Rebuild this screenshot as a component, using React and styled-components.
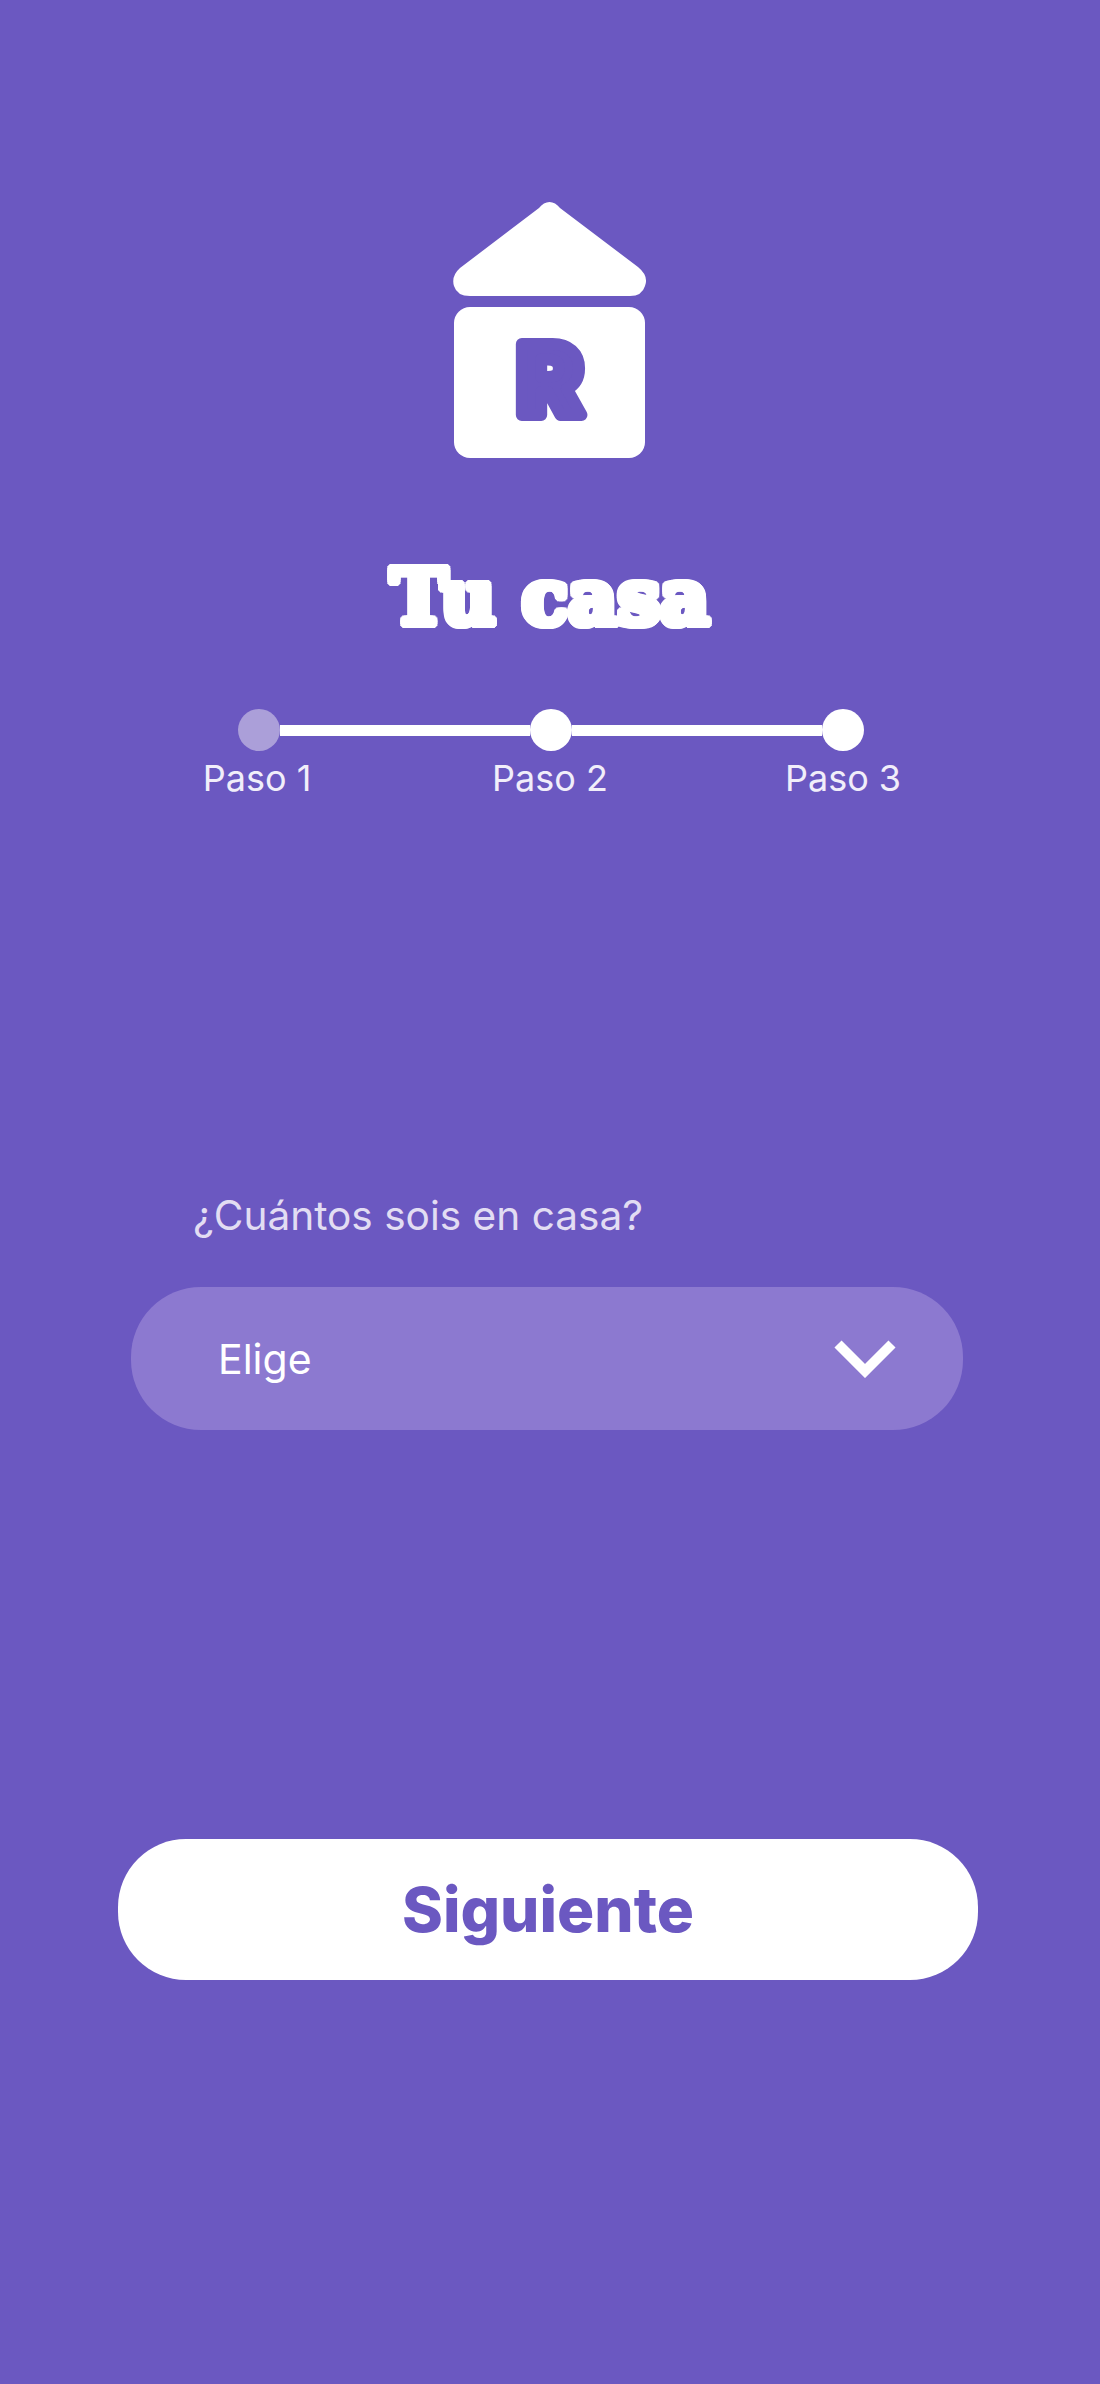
import React from "react";
import styled, { createGlobalStyle } from "styled-components";

const Global = createGlobalStyle`
  html, body { margin: 0; padding: 0; background: #6b58c1; }
  * { box-sizing: border-box; }
`;

const Page = styled.main`
  width: 1100px;
  height: 2384px;
  background: #6b58c1;
  color: #fff;
  font-family: Inter, "Liberation Sans", sans-serif;
  display: flex;
  flex-direction: column;
  padding-top: 200px;
  overflow: hidden;
`;

const Logo = styled.svg`
  display: block;
  width: 196px;
  height: 260px;
  margin: 0 auto;
  flex: none;
`;

const Title = styled.h1`
  margin: 103px 0 0;
  height: 70px;
  font-family: "DejaVu Serif", serif;
  font-weight: 700;
  font-size: 76px;
  line-height: 70px;
  letter-spacing: 0;
  text-align: center;
  color: #fff;
  text-shadow:
    4px 0 0 #fff, -4px 0 0 #fff, 0 4px 0 #fff, 0 -4px 0 #fff,
    3px 3px 0 #fff, -3px 3px 0 #fff, 3px -3px 0 #fff, -3px -3px 0 #fff,
    4px 2px 0 #fff, -4px 2px 0 #fff, 4px -2px 0 #fff, -4px -2px 0 #fff,
    2px 4px 0 #fff, -2px 4px 0 #fff, 2px -4px 0 #fff, -2px -4px 0 #fff;
`;

const Stepper = styled.section`
  margin: 76px 0 0 238px;
  width: 626px;
  display: flex;
  flex-direction: column;
`;

const Track = styled.div`
  display: flex;
  align-items: center;
`;

const Dot = styled.span`
  width: 42px;
  height: 42px;
  flex: none;
  border-radius: 50%;
  background: ${(p) => (p.$current ? "#ab9fd9" : "#fff")};
`;

const Line = styled.span`
  flex: 1;
  height: 11px;
  background: #fff;
`;

const StepLabels = styled.div`
  display: flex;
  justify-content: space-between;
  margin: 5px 0 0 -2px;
  font-size: 36px;
  line-height: 44px;
  color: #f1eefa;
`;

const StepLabel = styled.span`
  width: 42px;
  display: flex;
  justify-content: center;
  white-space: nowrap;
`;

const Question = styled.label`
  display: block;
  margin: 392px 0 0 193px;
  font-size: 40.6px;
  line-height: 48px;
  color: #e2ddf3;
`;

const Select = styled.div`
  margin: 47px 0 0 131px;
  width: 832px;
  height: 143px;
  border-radius: 70px;
  background: #8c79d0;
  display: flex;
  align-items: center;
  justify-content: space-between;
  padding: 0 67px 0 87px;
  font-size: 41px;
  font-weight: 400;
  color: #fff;
`;

const Chevron = styled.svg`
  display: block;
  width: 62px;
  height: 39px;
`;

const NextButton = styled.button`
  margin: 409px 0 0 118px;
  width: 860px;
  height: 141px;
  border: 0;
  border-radius: 68px;
  background: #fff;
  color: #6b58c1;
  font-family: Inter, "Liberation Sans", sans-serif;
  font-size: 62px;
  font-weight: 800;
`;

export default function App() {
  return (
    <Page>
      <Global />
      <Logo viewBox="0 0 196 260" aria-label="Logo">
        <path
          d="M87 8 C93 0 102 0 108 8 L186 67 Q197 76 193 86 Q190 96 178 96 L18 96 Q5 96 2 86 Q-1 76 8 68 Z"
          fill="#fff"
        />
        <rect x="2" y="107" width="191" height="151" rx="16" fill="#fff" />
        <text
          x="98"
          y="215"
          textAnchor="middle"
          fontFamily="Inter, sans-serif"
          fontWeight="900"
          fontSize="98"
          fill="#6b58c1"
          stroke="#6b58c1"
          strokeWidth="12"
          strokeLinejoin="round"
        >
          R
        </text>
      </Logo>
      <Title>Tu casa</Title>
      <Stepper>
        <Track>
          <Dot $current />
          <Line />
          <Dot />
          <Line />
          <Dot />
        </Track>
        <StepLabels>
          <StepLabel>Paso 1</StepLabel>
          <StepLabel>Paso 2</StepLabel>
          <StepLabel>Paso 3</StepLabel>
        </StepLabels>
      </Stepper>
      <Question>¿Cuántos sois en casa?</Question>
      <Select>
        <span>Elige</span>
        <Chevron viewBox="0 0 62 39" fill="none">
          <path d="M4 5 L31 32 L58 5" stroke="#fff" strokeWidth="10" />
        </Chevron>
      </Select>
      <NextButton>Siguiente</NextButton>
    </Page>
  );
}
